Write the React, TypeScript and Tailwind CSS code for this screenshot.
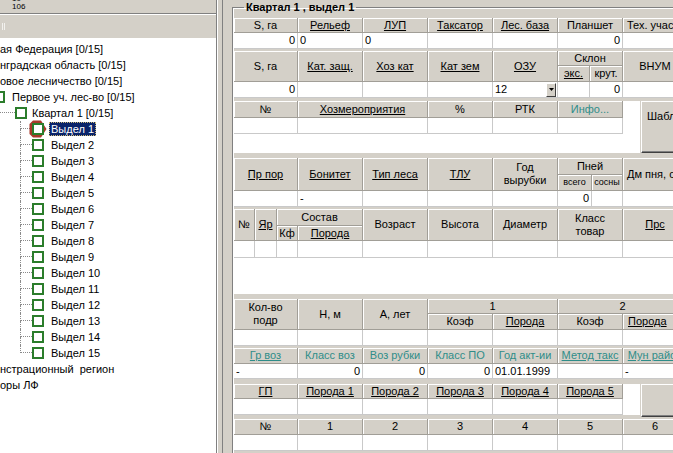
import React from 'react';

const hd =
  'flex items-center justify-center text-center whitespace-nowrap overflow-hidden bg-[#d4d0c8] border-r border-b border-[#a19e97] shadow-[inset_1px_1px_0_#ffffff]';
const cell =
  'flex items-center px-[2px] whitespace-nowrap overflow-hidden bg-white border-r border-b border-[#c9c9c9]';
const teal = 'text-[#2f8d89]';

function H({ c = '', children }: { c?: string; children?: React.ReactNode }) {
  return <div className={`${hd} ${c}`}>{children}</div>;
}

function C({ c = '', children }: { c?: string; children?: React.ReactNode }) {
  return <div className={`${cell} ${c}`}>{children}</div>;
}

// green status square used by the tree nodes
function NodeBox({ c = '' }: { c?: string }) {
  return <div className={`w-[12px] h-[12px] shrink-0 border-2 border-[#2b7d2b] bg-white ${c}`} />;
}

function SelectedBox() {
  return (
    <svg width="12" height="12" viewBox="0 0 12 12" className="shrink-0 overflow-visible">
      <polygon points="1,-2.5 9,-2.5 14.5,6 9,14.5 1,14.5 -2.5,11 -2.5,1" fill="#a8392a" />
      <rect x="1" y="1" width="10" height="10" fill="#ffffff" stroke="#2b7d2b" strokeWidth="2" />
    </svg>
  );
}

function Btn({ c = '', children }: { c?: string; children?: React.ReactNode }) {
  return (
    <div
      className={`ml-[1px] flex-1 bg-[#d4d0c8] border border-t-white border-l-white border-r-[#404040] border-b-[#404040] shadow-[inset_-1px_-1px_0_#808080] whitespace-nowrap ${c}`}
    >
      {children}
    </div>
  );
}

function Tree() {
  const items = Array.from({ length: 15 }, (_, i) => i + 1);
  return (
    <div className="flex-1 bg-white pt-[3px] overflow-hidden">
      <div className="h-[16px] flex items-center whitespace-nowrap">ая Федерация [0/15]</div>
      <div className="h-[16px] flex items-center whitespace-nowrap">нградская область [0/15]</div>
      <div className="h-[16px] flex items-center whitespace-nowrap">овое лесничество [0/15]</div>
      <div className="h-[16px] flex items-center whitespace-nowrap">
        <NodeBox c="-ml-[7px]" />
        <span className="ml-[7px]">Первое уч. лес-во [0/15]</span>
      </div>
      <div className="h-[16px] flex items-center whitespace-nowrap">
        <div className="w-[15px] self-stretch">
          <div className="h-[8px] border-b border-dotted border-[#8a8a8a]" />
        </div>
        <NodeBox />
        <span className="ml-[5px]">Квартал 1 [0/15]</span>
      </div>
      {items.map((n) => (
        <div key={n} className="h-[16px] flex items-center whitespace-nowrap">
          <div className="w-[20px] shrink-0" />
          <div className="w-[12px] self-stretch flex flex-col">
            <div className="h-[8px] border-l border-b border-dotted border-[#8a8a8a]" />
            {n < 15 && <div className="flex-1 border-l border-dotted border-[#8a8a8a]" />}
          </div>
          {n === 1 ? <SelectedBox /> : <NodeBox />}
          {n === 1 ? (
            <span className="ml-[5px] px-[1px] leading-[12px] bg-[#0a246a] text-white border border-dotted border-[#cbb774]">
              Выдел 1
            </span>
          ) : (
            <span className="ml-[6px] px-[1px]">Выдел {n}</span>
          )}
        </div>
      ))}
      <div className="h-[16px] flex items-center whitespace-nowrap">нстрационный&nbsp; регион</div>
      <div className="h-[16px] flex items-center whitespace-nowrap">оры ЛФ</div>
    </div>
  );
}

function LeftPane() {
  return (
    <div className="w-[217px] shrink-0 flex flex-col border-r border-[#808080]">
      <div className="h-[14px] shrink-0 border-b border-[#808080] overflow-hidden flex flex-col justify-end pb-[2px] pl-[12px] text-[8px] leading-[8px]">
        <span>10</span>
        <span>106</span>
      </div>
      <div className="h-[24px] shrink-0 border-t border-white flex items-center pl-[2px]">
        <div className="w-[3px] h-[7px] border-l border-r border-[#f2f1ee]" />
      </div>
      <Tree />
    </div>
  );
}

function Form() {
  return (
    <fieldset className="w-[560px] min-w-0 border border-[#808080] shadow-[inset_1px_1px_0_#ffffff] pl-[1px] pt-[4px] pb-[10px]">
      <legend className="ml-[10px] px-[2px] font-bold leading-[14px]">Квартал 1 , выдел 1</legend>

      <div className="grid grid-cols-[64px_65px_65px_65px_65px_65px_65px_65px] grid-rows-[15px_16px]">
        <H>S, га</H>
        <H c="underline">Рельеф</H>
        <H c="underline">ЛУП</H>
        <H c="underline">Таксатор</H>
        <H c="underline">Лес. база</H>
        <H>Планшет</H>
        <H c="justify-start pl-[4px]">Тех. участок</H>
        <H />
        <C c="justify-end">0</C>
        <C>0</C>
        <C>0</C>
        <C />
        <C />
        <C c="justify-end">0</C>
        <C />
        <C />
      </div>

      <div className="mt-[2px] grid grid-cols-[64px_65px_65px_65px_65px_32px_33px_65px_65px] grid-rows-[15px_16px_16px]">
        <H c="row-span-2">S, га</H>
        <H c="row-span-2 underline">Кат. защ.</H>
        <H c="row-span-2 underline">Хоз кат</H>
        <H c="row-span-2 underline">Кат зем</H>
        <H c="row-span-2 underline">ОЗУ</H>
        <H c="col-span-2">Склон</H>
        <H c="row-span-2">ВНУМ</H>
        <H c="row-span-2" />
        <H c="underline">экс.</H>
        <H>крут.</H>
        <C c="justify-end">0</C>
        <C />
        <C />
        <C />
        <C c="justify-between pr-[1px]">
          <span>12</span>
          <span className="w-[10px] h-[14px] flex items-center justify-center bg-[#d4d0c8] border border-t-white border-l-white border-r-[#404040] border-b-[#404040]">
            <svg width="5" height="3" viewBox="0 0 5 3">
              <polygon points="0,0 5,0 2.5,3" fill="#000" />
            </svg>
          </span>
        </C>
        <C />
        <C c="justify-end">0</C>
        <C />
        <C />
      </div>

      <div className="mt-[3px] flex">
        <div className="w-[406px] h-[52px] bg-white">
          <div className="grid grid-cols-[64px_130px_65px_65px_65px] grid-rows-[17px_16px]">
            <H>№</H>
            <H c="underline">Хозмероприятия</H>
            <H>%</H>
            <H>РТК</H>
            <H c={teal}>Инфо...</H>
            <C />
            <C />
            <C />
            <C />
            <C />
          </div>
        </div>
        <Btn c="h-[52px] pt-[8px] pl-[5px]">Шаблоны</Btn>
      </div>

      <div className="mt-[5px] grid grid-cols-[64px_65px_65px_65px_65px_34px_31px_65px_65px] grid-rows-[17px_16px_16px]">
        <H c="row-span-2 underline">Пр пор</H>
        <H c="row-span-2 underline">Бонитет</H>
        <H c="row-span-2 underline">Тип леса</H>
        <H c="row-span-2 underline">ТЛУ</H>
        <H c="row-span-2 leading-[13px]">
          Год
          <br />
          вырубки
        </H>
        <H c="col-span-2">Пней</H>
        <H c="row-span-2 justify-start pl-[4px]">Дм пня, см</H>
        <H c="row-span-2" />
        <H c="text-[9px]">всего</H>
        <H c="text-[9px]">сосны</H>
        <C />
        <C>-</C>
        <C />
        <C />
        <C />
        <C c="justify-end">0</C>
        <C />
        <C />
        <C />
      </div>

      <div className="mt-[2px] h-[85px] bg-white">
        <div className="grid grid-cols-[21px_22px_21px_65px_65px_65px_65px_65px_65px_65px] grid-rows-[17px_15px_17px]">
          <H c="row-span-2">№</H>
          <H c="row-span-2 underline">Яр</H>
          <H c="col-span-2">Состав</H>
          <H c="row-span-2">Возраст</H>
          <H c="row-span-2">Высота</H>
          <H c="row-span-2">Диаметр</H>
          <H c="row-span-2 leading-[13px]">
            Класс
            <br />
            товар
          </H>
          <H c="row-span-2 underline">Прс</H>
          <H c="row-span-2" />
          <H>Кф</H>
          <H c="underline">Порода</H>
          {Array.from({ length: 10 }, (_, i) => (
            <C key={i} />
          ))}
        </div>
      </div>

      <div className="mt-[5px] grid grid-cols-[64px_65px_65px_65px_65px_65px_65px_65px] grid-rows-[15px_16px_16px]">
        <H c="row-span-2 leading-[13px]">
          Кол-во
          <br />
          подр
        </H>
        <H c="row-span-2">Н, м</H>
        <H c="row-span-2">А, лет</H>
        <H c="col-span-2">1</H>
        <H c="col-span-2">2</H>
        <H c="row-span-2" />
        <H>Коэф</H>
        <H c="underline">Порода</H>
        <H>Коэф</H>
        <H c="underline justify-start pl-[5px]">Порода</H>
        {Array.from({ length: 8 }, (_, i) => (
          <C key={i} />
        ))}
      </div>

      <div className="mt-[2px] grid grid-cols-[64px_65px_65px_65px_65px_65px_65px_65px] grid-rows-[16px_15px]">
        <H c={`underline ${teal}`}>Гр воз</H>
        <H c={teal}>Класс воз</H>
        <H c={teal}>Воз рубки</H>
        <H c={teal}>Класс ПО</H>
        <H c={teal}>Год акт-ии</H>
        <H c={`underline ${teal}`}>Метод такс</H>
        <H c={`underline ${teal}`}>Мун район</H>
        <H />
        <C>-</C>
        <C c="justify-end">0</C>
        <C c="justify-end">0</C>
        <C c="justify-end">0</C>
        <C>01.01.1999</C>
        <C />
        <C>-</C>
        <C />
      </div>

      <div className="mt-[5px] flex items-start">
        <div className="w-[406px] h-[31px] bg-white">
          <div className="grid grid-cols-[64px_65px_65px_65px_65px_65px] grid-rows-[15px_16px]">
            <H c="underline">ГП</H>
            <H c="underline">Порода 1</H>
            <H c="underline">Порода 2</H>
            <H c="underline">Порода 3</H>
            <H c="underline">Порода 4</H>
            <H c="underline">Порода 5</H>
            {Array.from({ length: 6 }, (_, i) => (
              <C key={i} />
            ))}
          </div>
        </div>
        <Btn c="h-[33px]" />
      </div>

      <div className="mt-[2px] grid grid-cols-[64px_65px_65px_65px_65px_65px_65px_65px] grid-rows-[16px_16px]">
        <H>№</H>
        <H>1</H>
        <H>2</H>
        <H>3</H>
        <H>4</H>
        <H>5</H>
        <H>6</H>
        <H>7</H>
        {Array.from({ length: 8 }, (_, i) => (
          <C key={i} />
        ))}
      </div>
    </fieldset>
  );
}

export default function App() {
  return (
    <div className="w-[673px] h-[453px] flex overflow-hidden bg-[#d4d0c8] text-[11px] leading-[13px] text-black font-['Liberation_Sans',Arial,sans-serif]">
      <LeftPane />
      <div className="w-[6px] shrink-0 border-r border-[#808080] shadow-[inset_1px_0_0_#ffffff]" />
      <div className="flex-1 min-w-0 overflow-hidden pl-[9px]">
        <Form />
      </div>
    </div>
  );
}
